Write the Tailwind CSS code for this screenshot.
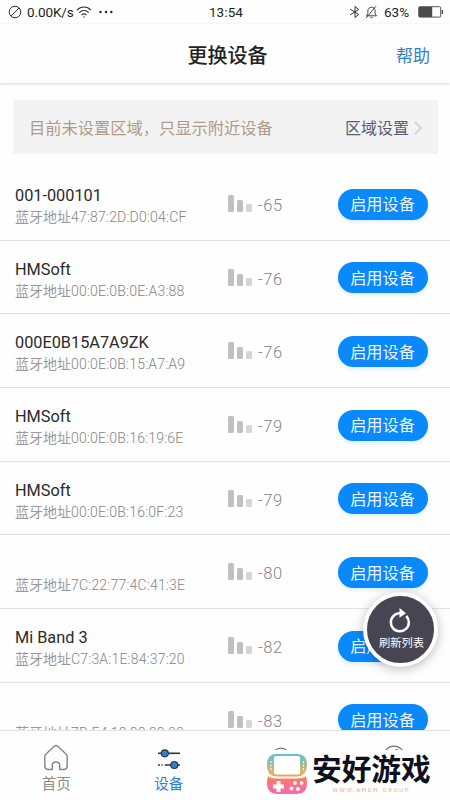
<!DOCTYPE html>
<html lang="zh-CN">
<head>
<meta charset="utf-8">
<title>更换设备</title>
<script src="https://cdn.jsdelivr.net/npm/@tailwindcss/browser@4"></script>
</head>
<body class="bg-white">
<div class="relative w-[450px] h-[800px] overflow-hidden bg-[#fefefe] flex flex-col font-['Roboto','Noto_Sans_CJK_SC',sans-serif] text-[#222]">
  <div class="h-6 shrink-0 grid grid-cols-[1fr_auto_1fr] items-center pl-2 pr-[6px] text-[13.5px] text-[#1d1d1d]">
    <div class="flex items-center">
      <svg class="w-[14px] h-[14px]" viewBox="0 0 14 14" fill="none" stroke="#333" stroke-width="1"><circle cx="7" cy="7" r="5.8"/><path d="M3 11 11 3"/></svg>
      <span class="ml-[5px] tracking-[-0.1px] w-[48px] whitespace-nowrap">0.00K/s</span>
      <svg class="ml-[1px] w-4 h-[14px]" viewBox="0 0 16 14" fill="none" stroke="#333" stroke-width="1.1"><path d="M1 5.2C5 1 11 1 15 5.2M3.3 7.6c2.7-2.8 6.7-2.8 9.4 0M5.6 10c1.5-1.5 3.3-1.5 4.8 0"/><circle cx="8" cy="12" r=".7" fill="#333" stroke="none"/></svg>
      <svg class="ml-[6px] w-4 h-1" viewBox="0 0 16 4" fill="#222"><circle cx="2.5" cy="2" r="1.2"/><circle cx="8" cy="2" r="1.2"/><circle cx="13.3" cy="2" r="1.2"/></svg>
    </div>
    <span class="tracking-[0.1px] pt-px">13:54</span>
    <div class="flex items-center justify-end">
      <svg class="w-3 h-[14px]" viewBox="0 0 12 14" fill="none" stroke="#333" stroke-width="1"><path d="m1.2 4.2 8.5 5.3L6 12.5v-11l3.7 3L1.2 9.8"/></svg>
      <svg class="ml-[4px] w-[13px] h-[14px]" viewBox="0 0 13 14" fill="none" stroke="#333" stroke-width=".9"><path d="M1.5 10.8h10c-1.4-1.1-1.4-2.7-1.4-5.1 0-2-1.6-3.4-3.6-3.4S2.9 3.7 2.9 5.7c0 2.4 0 4-1.4 5.1ZM1 13 11 1.2M5.3 12.3c.8.7 1.6.7 2.4 0"/></svg>
      <span class="ml-[6px] w-[27px]">63%</span>
      <svg class="ml-[7px] w-[26px] h-3" viewBox="0 0 26 12"><rect x=".7" y=".7" width="22" height="10.4" rx="1.2" fill="none" stroke="#555"/><path fill="#4a4a4a" d="M1 1h13.2v10H1zM23.7 4H25v4h-1.3z"/></svg>
    </div>
  </div>
  <header class="h-[59px] shrink-0 grid grid-cols-[1fr_auto_1fr] items-center px-5 pt-[5px] shadow-[0_1px_3px_rgba(0,0,0,.16)]">
    <span></span>
    <h1 class="text-[20px] font-medium leading-7 ml-[5px]">更换设备</h1>
    <span class="text-right text-[17px] leading-6 text-[#3180c9]">帮助</span>
  </header>
  <main class="flex-1 min-h-0 overflow-hidden pt-[17px]">
    <div class="mx-[13px] h-[54px] w-[425px] bg-[#f3f3f3] flex items-center justify-between pl-[16px] pr-[16px] text-[16.25px] pt-[4px]">
      <span class="text-[#b09b86]">目前未设置区域，只显示附近设备</span>
      <span class="flex items-center text-[#555d70] text-[16px]">区域设置<svg class="ml-[5px] mb-[2px] w-2 h-[14px]" viewBox="0 0 8 14" fill="none" stroke="#c7c7c7" stroke-width="1.2"><path d="m1 1 6 6-6 6"/></svg></span>
    </div>
    <div id="list" class="pt-[13px]"></div>
  </main>
  <nav class="h-[70px] shrink-0 relative z-10 bg-[#fefefe] border-t border-[#e3e3e3] grid grid-cols-4 text-[14.5px] text-[#8c8c8c]">
    <div class="flex flex-col items-center pt-[13px]">
      <svg class="w-[26px] h-[27px]" viewBox="0 0 26 27" fill="none" stroke="#858585" stroke-width="1.4" stroke-linejoin="round"><path d="M13 1.5Q13.8 1.5 15 2.6L22.5 9.5Q24.2 11 24.2 13V21.5Q24.2 25.5 20.5 25.5H16.7V21.2Q16.7 18 13 18T9.3 21.2V25.5H5.5Q1.8 25.5 1.8 21.5V13Q1.8 11 3.5 9.5L11 2.6Q12.2 1.5 13 1.5Z"/></svg>
      <span class="leading-[22px] mt-[3px]">首页</span>
    </div>
    <div class="flex flex-col items-center pt-[13px] text-[#3180c9]">
      <svg class="w-6 h-[27px]" viewBox="0 0 24 27" stroke="#30353c" stroke-width="1.6"><path d="M1 9.3h22"/><path d="M1 21h2m1.5 0h1.2m2 0H23"/><g fill="#3180c9" stroke-width="1.2"><circle cx="7.8" cy="9.3" r="3.5"/><circle cx="17.3" cy="21" r="3.5"/></g></svg>
      <span class="leading-[22px] mt-[3px]">设备</span>
    </div>
    <div class="flex justify-center pt-[16px]"><svg class="w-5 h-5" viewBox="0 0 20 20" fill="none" stroke="#777" stroke-width="1.3"><circle cx="10" cy="10" r="8.8"/></svg></div>
    <div class="flex justify-center pt-[14px]"><svg class="w-6 h-6" viewBox="0 0 24 24" fill="none" stroke="#777" stroke-width="1.3"><circle cx="12" cy="12" r="10.8"/><path d="M13 4.9h3"/></svg></div>
  </nav>

  <div class="absolute z-20 left-[363px] top-[592px] w-[75px] h-[75px] rounded-full bg-[#464551] border-[4px] border-white shadow-[0_2px_11px_rgba(0,0,0,.26)] flex flex-col items-center text-white pt-[11px]">
    <svg class="w-[24px] h-[26px] mr-[2px]" viewBox="0 0 24 26" fill="none" stroke="white" stroke-width="2.5"><path d="M18.2 9A9 9 0 1 1 6 8.5Q8.5 6 14 6"/><path d="m11.5 1 6.5 5.2-6.5 4.5Z" fill="white" stroke="none"/></svg>
    <span class="text-[11.3px] leading-4 mt-[3px] ml-[2px] whitespace-nowrap">刷新列表</span>
  </div>

  <div class="absolute z-20 left-[264px] top-[750px] w-[186px] h-[50px] bg-[#fefefe] flex">
    <svg class="ml-[2px] mt-[3px] w-[42px] h-[43px] shrink-0" viewBox="0 0 42 43">
      <defs><linearGradient id="g" x1="0" y1="0" x2="0" y2="1"><stop stop-color="#56c5d2"/><stop offset=".5" stop-color="#e9b35e"/><stop offset=".65" stop-color="#fb776f"/><stop offset="1" stop-color="#fb65b4"/></linearGradient></defs>
      <path fill="url(#g)" d="M11 1H31Q41 1 41 12T31 23.500H11Q1 23.500 1 12T11 1ZM2 23Q5 25.500 11 25.500H31Q37 25.500 40 23 41 26 41 30 41 41 30 41H12Q1 41 1 30 1 26 2 23Z"/>
      <path fill="none" stroke="#fff" stroke-width="1.200" d="M1.500 21.500Q5 24.500 11 24.500H31Q37 24.500 40.500 21.500"/>
      <rect x="8" y="3" width="26" height="18.500" rx="1.800" fill="#fff"/>
      <g fill="white"><path d="M10.500 28h4v3.500H18v4h-3.500V39h-4v-3.500H7v-4h3.500z"/><circle cx="29" cy="30" r="1.900"/><circle cx="35.500" cy="30" r="1.900"/><circle cx="25.500" cy="35.500" r="1.900"/><circle cx="32" cy="36" r="1.900"/></g>
      <path stroke="white" stroke-width="1" stroke-dasharray="2 1.500" d="M5 8v9m32.500-9v9"/>
    </svg>
    <div class="flex flex-col items-center ml-[4px]">
      <span class="text-[29.7px] leading-[36px] mt-[2px] font-bold text-[#10101c] whitespace-nowrap">安好游戏</span>
      <span class="text-[6px] leading-[8px] tracking-[1.65px] whitespace-nowrap text-[#dcb79f] mt-[-2px]">WWW.<span class="text-[#e79a88]">AHCH</span> GROUP</span>
    </div>
  </div>
</div>
<script>
const devices = [
  ['001-000101', '47:87:2D:D0:04:CF', '-65'],
  ['HMSoft', '00:0E:0B:0E:A3:88', '-76'],
  ['000E0B15A7A9ZK', '00:0E:0B:15:A7:A9', '-76'],
  ['HMSoft', '00:0E:0B:16:19:6E', '-79'],
  ['HMSoft', '00:0E:0B:16:0F:23', '-79'],
  ['', '7C:22:77:4C:41:3E', '-80'],
  ['Mi Band 3', 'C7:3A:1E:84:37:20', '-82'],
  ['', '7D:E4:10:00:00:00', '-83']
];
document.getElementById('list').innerHTML = devices.map(([name, mac, rssi]) => `
  <div class="h-[73.7px] border-b border-[#e2e2e2] grid grid-cols-[212px_110px_90px] pl-[15px]">
    <div class="pt-[17px] whitespace-nowrap">
      <div class="h-[23px] leading-[23px] text-[16.3px] text-[#2a2a2a]">${name}</div>
      <div class="leading-[20px] text-[14px] text-[#9a9a9a]">蓝牙地址<span class="font-light text-[#858585] tracking-[0.2px]">${mac}</span></div>
    </div>
    <div class="flex h-[24px] mt-[26px]">
      <svg class="ml-[1px] mt-[2px] w-6 h-[17px]" viewBox="0 0 24 17"><rect width="6" height="17" rx="1.5" fill="#c0c0c0"/><rect x="9" y="5" width="6" height="12" rx="1.5" fill="#c0c0c0"/><rect x="18" y="9" width="6" height="8" rx="1.5" fill="#d5d5d5"/></svg>
      <span class="ml-[6px] mt-px text-[16.5px] leading-[24px] font-light text-[#858585] tracking-[0.6px]">${rssi}</span>
    </div>
    <div class="mt-[21.5px] ml-[1px] w-[90px] h-[31px] rounded-full bg-[#0a89fb] text-white/95 text-[16.2px] flex items-center justify-center pt-[3px] pr-px shadow-[0_2px_4px_rgba(10,137,251,.14)]">启用设备</div>
  </div>`).join('');
</script>
</body>
</html>
